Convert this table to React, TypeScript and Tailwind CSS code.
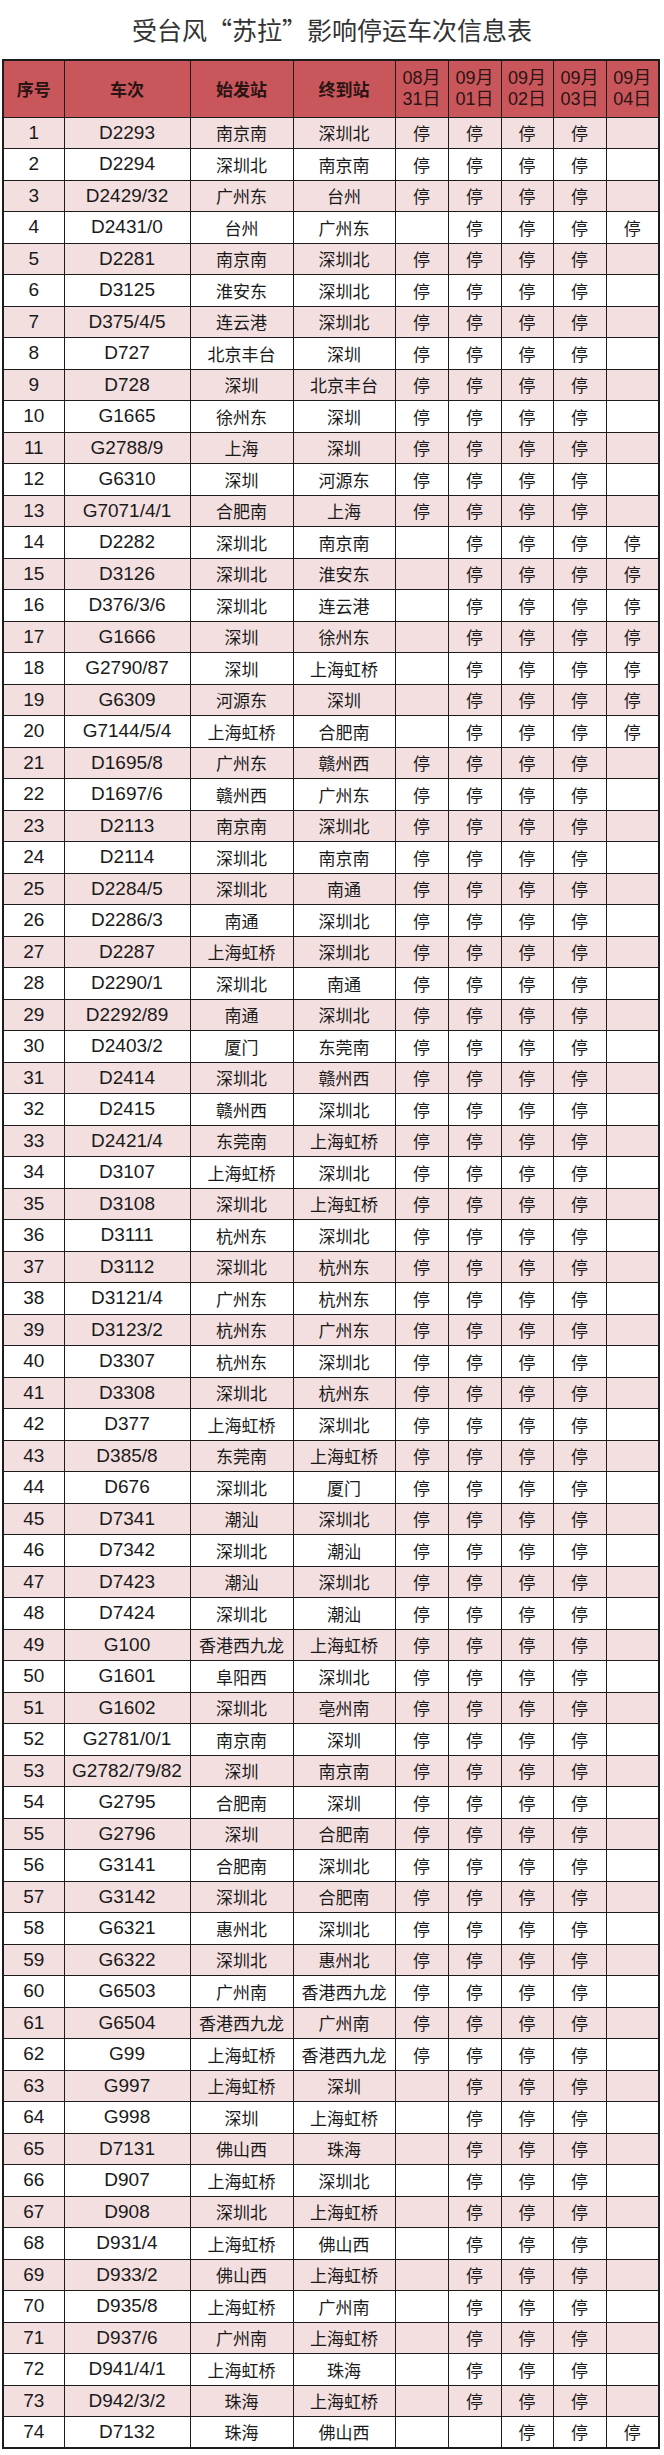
import React from 'react';

type Row = [string, string, string, string];

// [train, from, to, stop pattern for 08/31 .. 09/04]
const rows: Row[] = [
  ['D2293', '南京南', '深圳北', '11110'],
  ['D2294', '深圳北', '南京南', '11110'],
  ['D2429/32', '广州东', '台州', '11110'],
  ['D2431/0', '台州', '广州东', '01111'],
  ['D2281', '南京南', '深圳北', '11110'],
  ['D3125', '淮安东', '深圳北', '11110'],
  ['D375/4/5', '连云港', '深圳北', '11110'],
  ['D727', '北京丰台', '深圳', '11110'],
  ['D728', '深圳', '北京丰台', '11110'],
  ['G1665', '徐州东', '深圳', '11110'],
  ['G2788/9', '上海', '深圳', '11110'],
  ['G6310', '深圳', '河源东', '11110'],
  ['G7071/4/1', '合肥南', '上海', '11110'],
  ['D2282', '深圳北', '南京南', '01111'],
  ['D3126', '深圳北', '淮安东', '01111'],
  ['D376/3/6', '深圳北', '连云港', '01111'],
  ['G1666', '深圳', '徐州东', '01111'],
  ['G2790/87', '深圳', '上海虹桥', '01111'],
  ['G6309', '河源东', '深圳', '01111'],
  ['G7144/5/4', '上海虹桥', '合肥南', '01111'],
  ['D1695/8', '广州东', '赣州西', '11110'],
  ['D1697/6', '赣州西', '广州东', '11110'],
  ['D2113', '南京南', '深圳北', '11110'],
  ['D2114', '深圳北', '南京南', '11110'],
  ['D2284/5', '深圳北', '南通', '11110'],
  ['D2286/3', '南通', '深圳北', '11110'],
  ['D2287', '上海虹桥', '深圳北', '11110'],
  ['D2290/1', '深圳北', '南通', '11110'],
  ['D2292/89', '南通', '深圳北', '11110'],
  ['D2403/2', '厦门', '东莞南', '11110'],
  ['D2414', '深圳北', '赣州西', '11110'],
  ['D2415', '赣州西', '深圳北', '11110'],
  ['D2421/4', '东莞南', '上海虹桥', '11110'],
  ['D3107', '上海虹桥', '深圳北', '11110'],
  ['D3108', '深圳北', '上海虹桥', '11110'],
  ['D3111', '杭州东', '深圳北', '11110'],
  ['D3112', '深圳北', '杭州东', '11110'],
  ['D3121/4', '广州东', '杭州东', '11110'],
  ['D3123/2', '杭州东', '广州东', '11110'],
  ['D3307', '杭州东', '深圳北', '11110'],
  ['D3308', '深圳北', '杭州东', '11110'],
  ['D377', '上海虹桥', '深圳北', '11110'],
  ['D385/8', '东莞南', '上海虹桥', '11110'],
  ['D676', '深圳北', '厦门', '11110'],
  ['D7341', '潮汕', '深圳北', '11110'],
  ['D7342', '深圳北', '潮汕', '11110'],
  ['D7423', '潮汕', '深圳北', '11110'],
  ['D7424', '深圳北', '潮汕', '11110'],
  ['G100', '香港西九龙', '上海虹桥', '11110'],
  ['G1601', '阜阳西', '深圳北', '11110'],
  ['G1602', '深圳北', '亳州南', '11110'],
  ['G2781/0/1', '南京南', '深圳', '11110'],
  ['G2782/79/82', '深圳', '南京南', '11110'],
  ['G2795', '合肥南', '深圳', '11110'],
  ['G2796', '深圳', '合肥南', '11110'],
  ['G3141', '合肥南', '深圳北', '11110'],
  ['G3142', '深圳北', '合肥南', '11110'],
  ['G6321', '惠州北', '深圳北', '11110'],
  ['G6322', '深圳北', '惠州北', '11110'],
  ['G6503', '广州南', '香港西九龙', '11110'],
  ['G6504', '香港西九龙', '广州南', '11110'],
  ['G99', '上海虹桥', '香港西九龙', '11110'],
  ['G997', '上海虹桥', '深圳', '01110'],
  ['G998', '深圳', '上海虹桥', '01110'],
  ['D7131', '佛山西', '珠海', '01110'],
  ['D907', '上海虹桥', '深圳北', '01110'],
  ['D908', '深圳北', '上海虹桥', '01110'],
  ['D931/4', '上海虹桥', '佛山西', '01110'],
  ['D933/2', '佛山西', '上海虹桥', '01110'],
  ['D935/8', '上海虹桥', '广州南', '01110'],
  ['D937/6', '广州南', '上海虹桥', '01110'],
  ['D941/4/1', '上海虹桥', '珠海', '01110'],
  ['D942/3/2', '珠海', '上海虹桥', '01110'],
  ['D7132', '珠海', '佛山西', '00111'],
];

const dates: [string, string][] = [
  ['08月', '31日'],
  ['09月', '01日'],
  ['09月', '02日'],
  ['09月', '03日'],
  ['09月', '04日'],
];

const cell = 'border-[1.5px] border-[#1c1c1c] p-0 text-center align-middle';
const latin = "font-['Liberation_Sans','Noto_Sans_CJK_SC',sans-serif] text-[19px]";
const cjk = "font-['Noto_Sans_CJK_SC',sans-serif] text-[17px]";

export default function App() {
  return (
    <div className="w-[664px] bg-white text-[#1a1a1a]">
      <div className="h-[59px] flex items-center justify-center">
        <h1 className="font-['Noto_Sans_CJK_SC',sans-serif] text-[25px] text-[#333] leading-none">
          受台风“苏拉”影响停运车次信息表
        </h1>
      </div>

      <table className="ml-[2px] w-[656px] table-fixed border-collapse border-2 border-[#1c1c1c]">
        <colgroup>
          <col className="w-[61px]" />
          <col className="w-[126px]" />
          <col className="w-[103px]" />
          <col className="w-[102px]" />
          <col className="w-[53px]" />
          <col className="w-[53px]" />
          <col className="w-[52px]" />
          <col className="w-[53px]" />
          <col className="w-[53px]" />
        </colgroup>
        <thead>
          <tr className="h-[57px] bg-[#c9565b] text-[#2a1414]">
            {['序号', '车次', '始发站', '终到站'].map((h) => (
              <th key={h} className={`${cell} ${cjk} font-bold`}>
                {h}
              </th>
            ))}
            {dates.map(([m, d]) => (
              <th key={m + d} className={`${cell} font-['Liberation_Sans','Noto_Sans_CJK_SC',sans-serif] text-[18px] font-normal leading-[21px]`}>
                {m}
                <br />
                {d}
              </th>
            ))}
          </tr>
        </thead>
        <tbody>
          {rows.map(([train, from, to, stops], i) => (
            <tr key={i} className={`h-[31.5px] ${i % 2 === 0 ? 'bg-[#f3dfe0]' : 'bg-white'}`}>
              <td className={`${cell} ${latin}`}>{i + 1}</td>
              <td className={`${cell} ${latin}`}>{train}</td>
              <td className={`${cell} ${cjk}`}>{from}</td>
              <td className={`${cell} ${cjk}`}>{to}</td>
              {stops.split('').map((s, j) => (
                <td key={j} className={`${cell} ${cjk}`}>
                  {s === '1' ? '停' : ''}
                </td>
              ))}
            </tr>
          ))}
        </tbody>
      </table>
    </div>
  );
}
